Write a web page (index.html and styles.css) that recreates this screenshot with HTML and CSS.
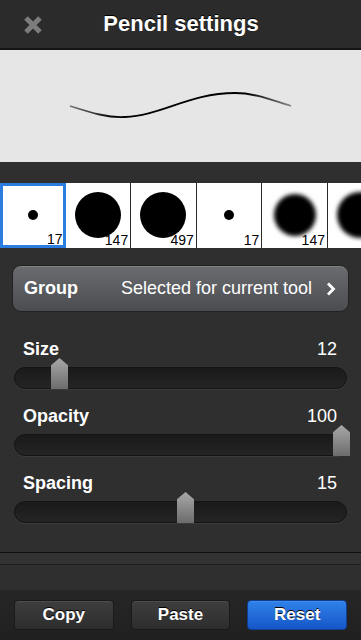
FILE: index.html
```html
<!DOCTYPE html>
<html lang="en">
<head>
  <meta charset="UTF-8" />
  <meta name="viewport" content="width=device-width, initial-scale=1.0"/>
  <title>Pencil settings</title>
  <link rel="stylesheet" href="styles.css">
</head>
<body>
<div class="screen">
  <header class="topbar">
    <span class="close-btn">
      <svg width="20" height="20" viewBox="0 0 20 20">
        <path d="M3 3 L17 17 M17 3 L3 17" stroke="#7c7c7c" stroke-width="5" stroke-linecap="butt"/>
      </svg>
    </span>
    <h1 class="title">Pencil settings</h1>
  </header>

  <div class="preview">
    <svg width="361" height="112" viewBox="0 0 361 112">
      <defs>
        <linearGradient id="fade" x1="70" y1="0" x2="291" y2="0" gradientUnits="userSpaceOnUse">
          <stop offset="0" stop-color="#777"/>
          <stop offset="0.2" stop-color="#000"/>
          <stop offset="0.8" stop-color="#000"/>
          <stop offset="1" stop-color="#888"/>
        </linearGradient>
      </defs>
      <path d="M70 56 C 92 63, 108 68, 125 67 C 160 66, 190 43, 235 43 C 256 43, 274 51, 291 56" fill="none" stroke="url(#fade)" stroke-width="1.8"/>
    </svg>
  </div>

  <!-- brush presets -->
  <div class="brush-strip">
    <div class="brush selected"><span class="dot small"></span><span class="num">17</span></div>
    <div class="brush"><span class="dot big"></span><span class="num">147</span></div>
    <div class="brush"><span class="dot big"></span><span class="num">497</span></div>
    <div class="brush"><span class="dot small"></span><span class="num">17</span></div>
    <div class="brush"><span class="dot soft"></span><span class="num">147</span></div>
    <div class="brush"><span class="dot soft last"></span></div>
  </div>

  <main class="settings">
    <div class="group-btn">
      <span class="group-label">Group</span>
      <span class="group-value">Selected for current tool</span>
      <svg class="chevron" width="10" height="14" viewBox="0 0 10 14">
        <path d="M2 1.5 L7.5 7 L2 12.5" fill="none" stroke="#fff" stroke-width="2.8"/>
      </svg>
    </div>

    <div class="setting first">
      <div class="setting-head"><span class="setting-label">Size</span><span class="setting-value">12</span></div>
      <div class="track"><span class="thumb" style="left:36px"></span></div>
    </div>
    <div class="setting">
      <div class="setting-head"><span class="setting-label">Opacity</span><span class="setting-value">100</span></div>
      <div class="track"><span class="thumb" style="left:318px"></span></div>
    </div>
    <div class="setting">
      <div class="setting-head"><span class="setting-label">Spacing</span><span class="setting-value">15</span></div>
      <div class="track"><span class="thumb" style="left:162px"></span></div>
    </div>

    <div class="section-sep"></div>

    <div class="setting-head hidden-row"><span class="setting-label">Stabilization</span><span class="setting-value">4</span></div>
  </main>

  <footer class="toolbar">
    <button class="tool-btn">Copy</button>
    <button class="tool-btn">Paste</button>
    <button class="tool-btn primary">Reset</button>
  </footer>
</div>
</body>
</html>
```

FILE: styles.css
```css
html, body {
  margin: 0;
  padding: 0;
  background: #2f2f2f;
  font-family: 'Liberation Sans', Arial, sans-serif;
  overflow: hidden;
}

.screen {
  width: 361px;
  height: 640px;
  display: flex;
  flex-direction: column;
  background: #2f2f2f;
}

/* Header */
.topbar {
  height: 48px;
  flex: 0 0 48px;
  display: flex;
  align-items: center;
  justify-content: center;
  position: relative;
  background: #2b2b2b;
  border-bottom: 2px solid #151515;
}
.close-btn {
  position: absolute;
  left: 23px;
  top: 15px;
  width: 20px;
  height: 20px;
}
.close-btn svg {
  display: block;
}
.title {
  margin: 0;
  font-size: 22px;
  font-weight: bold;
  color: #fff;
  text-shadow: 0 -1px 0 #000;
  padding-left: 1px;
}

/* Stroke preview */
.preview {
  height: 112px;
  flex: 0 0 112px;
  background: #e6e6e6;
}
.preview svg {
  display: block;
}

/* Brush presets */
.brush-strip {
  margin-top: 21px;
  height: 65px;
  flex: 0 0 65px;
  display: flex;
  overflow: hidden;
  background: #fff;
}
.brush {
  flex: 0 0 65.6px;
  height: 65px;
  box-sizing: border-box;
  border-right: 1px solid #2a2a2a;
  background: #fff;
  position: relative;
  display: flex;
  align-items: center;
  justify-content: center;
  overflow: hidden;
}
.brush.selected {
  border: 3px solid #2a7ce0;
}
.dot {
  display: block;
  flex: none;
  background: #000;
  border-radius: 50%;
}
.dot.small {
  width: 10px;
  height: 10px;
  margin-bottom: 1px;
}
.dot.big {
  width: 46px;
  height: 46px;
  margin-bottom: 2px;
}
.dot.soft {
  width: 42px;
  height: 42px;
  margin-bottom: 2px;
  filter: blur(2px);
}
.dot.soft.last {
  width: 46px;
  height: 46px;
}
.num {
  position: absolute;
  right: 2px;
  bottom: 0;
  font-size: 14px;
  line-height: 15px;
  color: #000;
}
.brush.selected .num {
  right: 0;
  bottom: -2px;
}

/* Settings */
.settings {
  flex: 1;
  overflow: hidden;
}
.group-btn {
  margin: 17px 12px 0 12px;
  height: 47px;
  box-sizing: border-box;
  display: flex;
  align-items: center;
  padding: 0 12px 0 11px;
  border-radius: 9px;
  border: 1px solid #222;
  background: linear-gradient(#6a6c70, #4a4c50);
  box-shadow: inset 0 1px 0 rgba(255,255,255,0.15);
  color: #fff;
  font-size: 18px;
}
.group-label {
  font-weight: bold;
}
.group-value {
  margin-left: auto;
  margin-right: 14px;
}
.chevron {
  display: block;
}

.setting {
  margin: 17px 14px 0 14px;
}
.setting.first {
  margin-top: 27px;
}
.setting-head {
  display: flex;
  justify-content: space-between;
  padding: 0 10px 0 9px;
  height: 20px;
  line-height: 20px;
  font-size: 18px;
  color: #fff;
}
.setting-label {
  font-weight: bold;
}
.track {
  margin-top: 8px;
  height: 22px;
  box-sizing: border-box;
  border-radius: 11px;
  border: 1px solid #141414;
  background: linear-gradient(#1a1a1a, #242424);
  box-shadow: 0 1px 0 rgba(255,255,255,0.06);
  position: relative;
}
.thumb {
  position: absolute;
  top: -10px;
  width: 17px;
  height: 31px;
  background: linear-gradient(#a8a8a8, #6c6c6c);
  clip-path: polygon(50% 0, 100% 23%, 100% 100%, 0 100%, 0 23%);
}

.section-sep {
  margin-top: 29px;
  height: 11px;
  border-top: 1px solid #0f0f0f;
  border-bottom: 1px solid #1f1f1f;
  background: #323232;
}
.hidden-row {
  margin: 22px 14px 0 14px;
}

/* Bottom toolbar */
.toolbar {
  height: 50px;
  flex: 0 0 50px;
  box-sizing: border-box;
  padding: 10px 14px 10px 14px;
  display: grid;
  grid-template-columns: 1fr 1fr 1fr;
  gap: 17px;
  background: linear-gradient(#262626, #202020);
}
.tool-btn {
  height: 30px;
  margin: 0;
  padding: 0;
  border: 1px solid #1a1a1a;
  border-radius: 4px;
  background: linear-gradient(#3e3e3e, #2d2d2d);
  box-shadow: inset 0 1px 0 rgba(255,255,255,0.08);
  color: #fff;
  font-family: 'Liberation Sans', Arial, sans-serif;
  font-size: 17px;
  font-weight: bold;
  text-shadow: 0 -1px 0 #000;
}
.tool-btn.primary {
  background: linear-gradient(#3082ea, #1556c8);
  border-color: #0f3f95;
}
```
